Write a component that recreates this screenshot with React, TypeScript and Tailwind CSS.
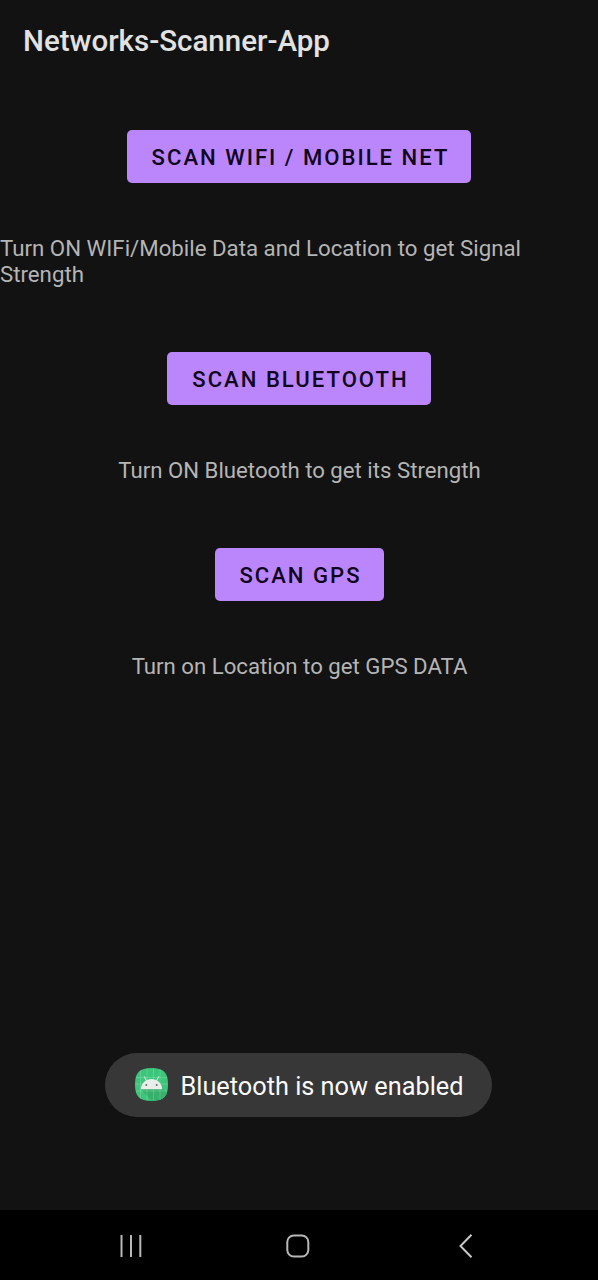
import React from "react";

function ScanButton({ label, className }: { label: string; className: string }) {
  return (
    <button
      className={`flex h-[53px] shrink-0 items-center justify-center rounded-[5px] bg-[#bb86fc] pl-[3px] text-[22.1px] font-medium tracking-[2px] whitespace-nowrap text-[#10051c] ${className}`}
    >
      {label}
    </button>
  );
}

function AppIcon() {
  return (
    <svg width="33" height="33" viewBox="0 0 33 33" className="mr-[12.5px] shrink-0">
      <path
        d="M16.500 0C28.500 0 33 4.500 33 16.500S28.500 33 16.500 33 0 28.500 0 16.500 4.500 0 16.500 0z"
        fill="#3cc67b"
      />
      <path d="M6 21.300L16.500 32.800C25 32.800 30 30.500 32 25L27.200 20z" fill="#36b06d" />
      <path
        d="M5.500 2.500v28M12 .5v32M18.500 .2v32.600M25 1v31M1 9.500h31M.2 16h32.600M1 23h31"
        fill="none"
        stroke="#fff"
        strokeOpacity=".22"
        strokeWidth=".8"
      />
      <path d="M9.300 8.700l2 3.700M23.700 8.700l-2 3.700" fill="none" stroke="#e4eee8" strokeWidth="1" strokeLinecap="round" />
      <path d="M5.700 21.300C6.300 15 11 11 16.500 11s10.200 4 10.800 10.300z" fill="#e9eeeb" />
      <circle cx="11.300" cy="17" r="1" fill="#5d7468" />
      <circle cx="21.700" cy="17" r="1" fill="#5d7468" />
    </svg>
  );
}

export default function App() {
  return (
    <div className="flex h-[1280px] w-[598px] flex-col overflow-hidden bg-[#121212] font-['Roboto',sans-serif]">
      <header className="flex h-[82px] shrink-0 items-center pl-[23px] text-[29.5px] font-medium text-[#e2e2e2]">
        <h1 className="whitespace-nowrap">Networks-Scanner-App</h1>
      </header>
      <main className="flex flex-1 flex-col items-center pt-[48px] text-[22.2px] leading-[26px] text-[#b5b5b5]">
        <ScanButton label="SCAN WIFI / MOBILE NET" className="w-[344px]" />
        <p className="mt-[52px] w-full text-[22.25px]">
          Turn ON WIFi/Mobile Data and Location to get Signal
          <br />
          Strength
        </p>
        <ScanButton label="SCAN BLUETOOTH" className="mt-[65px] w-[264px]" />
        <p className="mt-[52px] pl-px">Turn ON Bluetooth to get its Strength</p>
        <ScanButton label="SCAN GPS" className="mt-[65px] w-[169px]" />
        <p className="mt-[52px] pl-px">Turn on Location to get GPS DATA</p>
        <div className="mt-auto mr-px mb-[93px] flex h-[64px] w-[387px] items-center rounded-full bg-[#373737] pb-px pl-[30px] text-[25.3px] text-[#fafafa]">
          <AppIcon />
          <span className="pt-[4px] whitespace-nowrap">Bluetooth is now enabled</span>
        </div>
      </main>
      <nav className="flex h-[70px] shrink-0 items-center bg-black pt-[2px] pl-[120px]">
        <svg width="22" height="24" viewBox="0 0 22 24" fill="none" stroke="#b8b8b8" strokeWidth="2">
          <path d="M1.500 1v22M11 1v22M20.300 1v22" />
        </svg>
        <svg width="24" height="24" viewBox="0 0 24 24" fill="none" stroke="#b8b8b8" strokeWidth="2" className="ml-[144px]">
          <rect x="1.300" y="1.500" width="21" height="21" rx="6.500" />
        </svg>
        <svg width="14" height="24" viewBox="0 0 14 24" fill="none" stroke="#c8c8c8" strokeWidth="2" className="ml-[148.500px]">
          <path d="M12.500 .8L1.500 12l11 11.200" />
        </svg>
      </nav>
    </div>
  );
}
